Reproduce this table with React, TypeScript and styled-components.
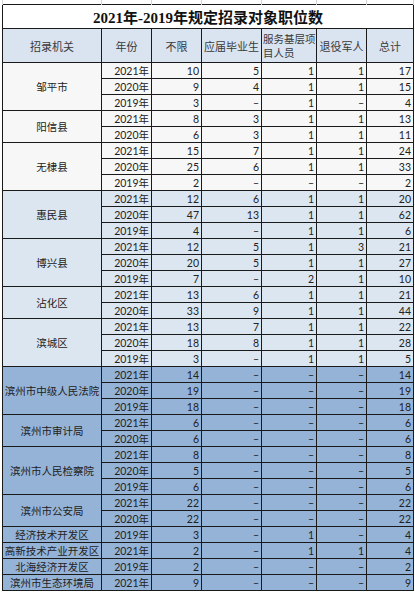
import React from 'react';
import styled, { createGlobalStyle, css } from 'styled-components';

type Tone = 'plain' | 'light' | 'dark';

interface Group {
  name: string;
  tone: Tone;
  rows: string[][];
}

const D = '–';

const groups: Group[] = [
  { name: '邹平市', tone: 'plain', rows: [['2021年', '10', '5', '1', '1', '17'], ['2020年', '9', '4', '1', '1', '15'], ['2019年', '3', D, '1', D, '4']] },
  { name: '阳信县', tone: 'plain', rows: [['2021年', '8', '3', '1', '1', '13'], ['2020年', '6', '3', '1', '1', '11']] },
  { name: '无棣县', tone: 'plain', rows: [['2021年', '15', '7', '1', '1', '24'], ['2020年', '25', '6', '1', '1', '33'], ['2019年', '2', D, D, D, '2']] },
  { name: '惠民县', tone: 'light', rows: [['2021年', '12', '6', '1', '1', '20'], ['2020年', '47', '13', '1', '1', '62'], ['2019年', '4', D, '1', '1', '6']] },
  { name: '博兴县', tone: 'light', rows: [['2021年', '12', '5', '1', '3', '21'], ['2020年', '20', '5', '1', '1', '27'], ['2019年', '7', D, '2', '1', '10']] },
  { name: '沾化区', tone: 'light', rows: [['2021年', '13', '6', '1', '1', '21'], ['2020年', '33', '9', '1', '1', '44']] },
  { name: '滨城区', tone: 'light', rows: [['2021年', '13', '7', '1', '1', '22'], ['2020年', '18', '8', '1', '1', '28'], ['2019年', '3', D, '1', '1', '5']] },
  { name: '滨州市中级人民法院', tone: 'dark', rows: [['2021年', '14', D, D, D, '14'], ['2020年', '19', D, D, D, '19'], ['2019年', '18', D, D, D, '18']] },
  { name: '滨州市审计局', tone: 'dark', rows: [['2021年', '6', D, D, D, '6'], ['2020年', '6', D, D, D, '6']] },
  { name: '滨州市人民检察院', tone: 'dark', rows: [['2021年', '8', D, D, D, '8'], ['2020年', '5', D, D, D, '5'], ['2019年', '6', D, D, D, '6']] },
  { name: '滨州市公安局', tone: 'dark', rows: [['2021年', '22', D, D, D, '22'], ['2020年', '22', D, D, D, '22']] },
  { name: '经济技术开发区', tone: 'dark', rows: [['2019年', '3', D, '1', D, '4']] },
  { name: '高新技术产业开发区', tone: 'dark', rows: [['2021年', '2', D, '1', '1', '4']] },
  { name: '北海经济开发区', tone: 'dark', rows: [['2019年', '2', D, D, D, '2']] },
  { name: '滨州市生态环境局', tone: 'dark', rows: [['2021年', '9', D, D, D, '9']] },
];

const colWidths = [99, 50, 50, 60, 55, 50, 47];

const toneColor: Record<Tone, string> = {
  plain: '#f7f7f7',
  light: '#dce6f1',
  dark: '#95b3d7',
};

const GlobalStyle = createGlobalStyle`
  html, body {
    margin: 0;
    padding: 0;
    background: #ffffff;
  }
  body {
    font-family: "Noto Sans CJK SC", sans-serif;
  }
`;

const Page = styled.div`
  width: 415px;
  height: 593px;
  overflow: hidden;
  padding-left: 2px;
  box-sizing: border-box;
`;

const Sheet = styled.table`
  border-collapse: collapse;
  table-layout: fixed;
  width: 411px;
`;

const GridStrip = styled.td`
  height: 4px;
  padding: 0;
  border-left: 1px solid #d4d4d4;
  border-right: 1px solid #d4d4d4;
  background: #ffffff;
`;

const TitleCell = styled.td`
  height: 23px;
  padding: 0;
  border: 1px solid #1a1a1a;
  background: #ffffff;
  text-align: center;
  vertical-align: middle;
  font-family: "Liberation Serif", "Noto Sans CJK SC", serif;
  font-weight: 700;
  font-size: 15px;
  color: #111111;
`;

const HeadCell = styled.th<{ $wrap?: boolean }>`
  height: 33px;
  padding: 0;
  border: 1px solid #1a1a1a;
  background: #d9e4f0;
  font-weight: 400;
  font-size: 11px;
  line-height: 14px;
  color: #3a3a3a;
  text-align: center;
  vertical-align: middle;

  ${p => p.$wrap && css`
    text-align: left;
    font-size: 10.5px;
    padding-left: 1px;
  `}
`;

const NameCell = styled.td<{ $tone: Tone }>`
  padding: 0;
  border: 1px solid #1a1a1a;
  background: ${p => toneColor[p.$tone]};
  text-align: center;
  vertical-align: middle;
  font-size: 10.5px;
  line-height: 14px;
  color: #222222;
  white-space: nowrap;
`;

const NumCell = styled.td<{ $tone: Tone }>`
  height: 15px;
  padding: 0 2px 0 0;
  border: 1px solid #1a1a1a;
  background: ${p => toneColor[p.$tone]};
  text-align: right;
  vertical-align: bottom;
  font-family: Lato, "Noto Sans CJK SC", sans-serif;
  font-size: 10.5px;
  line-height: 13px;
  color: #222222;
  white-space: nowrap;
`;

export default function App() {
  return (
    <>
      <GlobalStyle />
      <Page>
        <Sheet>
          <colgroup>
            {colWidths.map((w, i) => <col key={i} style={{ width: w }} />)}
          </colgroup>
          <tbody>
            <tr>
              {colWidths.map((_, i) => <GridStrip key={i} />)}
            </tr>
            <tr>
              <TitleCell colSpan={7}>2021年-2019年规定招录对象职位数</TitleCell>
            </tr>
            <tr>
              <HeadCell>招录机关</HeadCell>
              <HeadCell>年份</HeadCell>
              <HeadCell>不限</HeadCell>
              <HeadCell>应届毕业生</HeadCell>
              <HeadCell $wrap>服务基层项目人员</HeadCell>
              <HeadCell>退役军人</HeadCell>
              <HeadCell>总计</HeadCell>
            </tr>
            {groups.map(group =>
              group.rows.map((row, i) => (
                <tr key={group.name + row[0]}>
                  {i === 0 && <NameCell $tone={group.tone} rowSpan={group.rows.length}>{group.name}</NameCell>}
                  {row.map((value, j) => <NumCell key={j} $tone={group.tone}>{value}</NumCell>)}
                </tr>
              ))
            )}
          </tbody>
        </Sheet>
      </Page>
    </>
  );
}
